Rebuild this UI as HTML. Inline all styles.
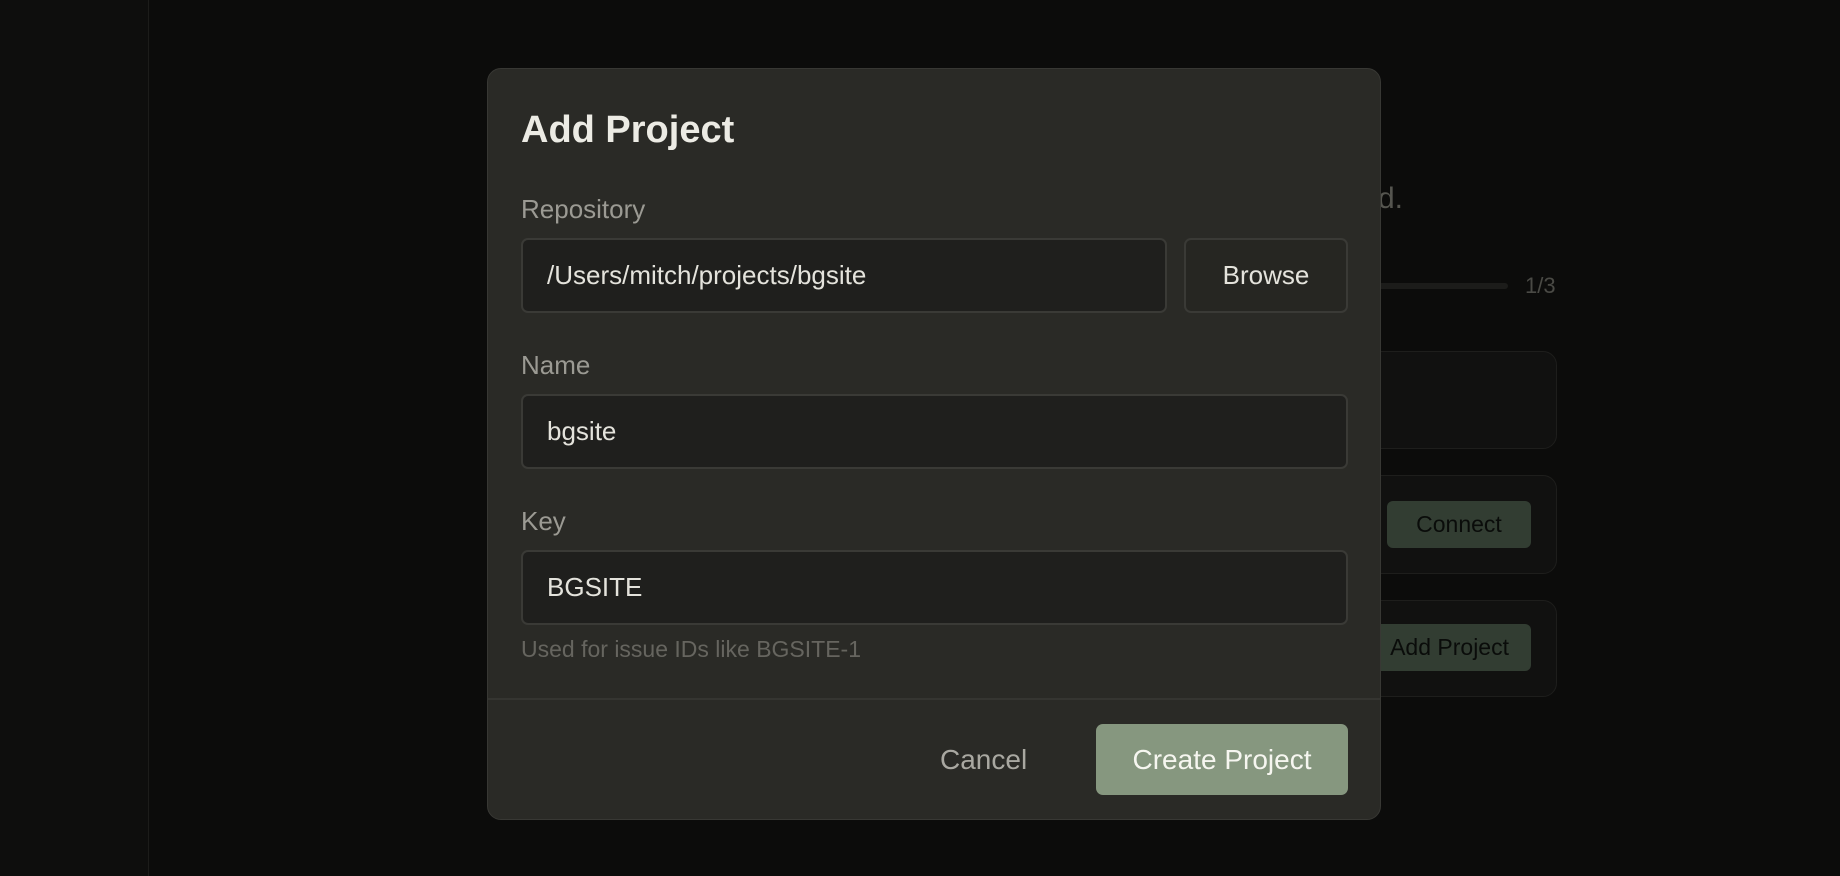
<!DOCTYPE html>
<html><head><style>
*{box-sizing:border-box;margin:0;padding:0}
body{width:1840px;height:876px;background:#0c0c0b;font-family:"Liberation Sans",sans-serif;position:relative;overflow:hidden}
.abs{position:absolute}
.side{left:0;top:0;width:149px;height:876px;background:#0e0e0d;border-right:1px solid #1c1c1a}
.card{border:1px solid #1e1e1c;background:#111110;border-radius:14px}
.gbtn{background:#323d32;color:#0a0c0a;border-radius:6px;font-size:23px;display:flex;align-items:center;justify-content:center}
.modal{left:487px;top:68px;width:894px;height:752px;background:#2a2a26;border:1px solid #383834;border-radius:14px}
.lbl{color:#9b9a93;font-size:26px}
.inp{background:#1f1f1d;border:2px solid #3a3a36;border-radius:7px;color:#e4e3dc;font-size:26px;display:flex;align-items:center;padding-left:24px}
</style></head><body>
<div class="abs side"></div>
<div class="abs" style="left:1378px;top:182px;color:#55554f;font-size:30px">d.</div>
<div class="abs" style="left:1370px;top:283px;width:138px;height:6px;background:#1c1c1a;border-radius:3px"></div>
<div class="abs" style="left:1525px;top:273px;color:#4a4a45;font-size:22px">1/3</div>
<div class="abs card" style="left:1360px;top:351px;width:197px;height:98px"></div>
<div class="abs card" style="left:1360px;top:475px;width:197px;height:99px"></div>
<div class="abs gbtn" style="left:1387px;top:501px;width:144px;height:47px">Connect</div>
<div class="abs card" style="left:1360px;top:600px;width:197px;height:97px"></div>
<div class="abs gbtn" style="left:1360px;top:624px;width:171px;height:47px;justify-content:flex-end;padding-right:22px">Add Project</div>

<div class="abs modal">
 <div class="abs" style="left:33px;top:40px;color:#ecebe4;font-size:38px;font-weight:bold">Add Project</div>
 <div class="abs lbl" style="left:33px;top:125px">Repository</div>
 <div class="abs inp" style="left:33px;top:169px;width:646px;height:75px">/Users/mitch/projects/bgsite</div>
 <div class="abs inp" style="left:696px;top:169px;width:164px;height:75px;padding:0;justify-content:center;background:#262622">Browse</div>
 <div class="abs lbl" style="left:33px;top:281px">Name</div>
 <div class="abs inp" style="left:33px;top:325px;width:827px;height:75px">bgsite</div>
 <div class="abs lbl" style="left:33px;top:437px">Key</div>
 <div class="abs inp" style="left:33px;top:481px;width:827px;height:75px">BGSITE</div>
 <div class="abs" style="left:33px;top:567px;color:#66655f;font-size:23px">Used for issue IDs like BGSITE-1</div>
 <div class="abs" style="left:0;top:629px;width:892px;height:2px;background:#353531"></div>
 <div class="abs" style="left:452px;top:675px;color:#a9a8a1;font-size:28px">Cancel</div>
 <div class="abs" style="left:608px;top:655px;width:252px;height:71px;background:#86977f;border-radius:7px;color:#f6f6f0;font-size:28px;display:flex;align-items:center;justify-content:center">Create Project</div>
</div>
</body></html>
